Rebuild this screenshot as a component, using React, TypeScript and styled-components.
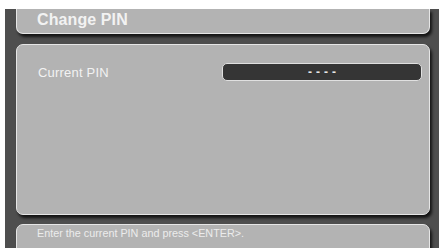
import styled, { createGlobalStyle } from 'styled-components';

const GlobalStyle = createGlobalStyle`
  html, body {
    margin: 0;
    padding: 0;
    background: #ffffff;
  }
  body {
    font-family: "Liberation Sans", Arial, sans-serif;
  }
`;

const Screen = styled.div`
  margin: 9px 0 0 5px;
  height: 239px;
  background: #4e4e4e;
  overflow: hidden;
  display: flex;
  flex-direction: column;
  gap: 10px;
  padding: 0 9px 0 11px;
`;

const Panel = styled.div<{ $top?: boolean }>`
  box-sizing: border-box;
  background: #b3b3b3;
  border: 1.5px solid #e6e6e6;
  border-top: ${(p) => (p.$top ? 'none' : '1.5px solid #e6e6e6')};
  border-radius: ${(p) => (p.$top ? '0 0 7px 7px' : '7px')};
  box-shadow: 2px 3px 3px rgba(0, 0, 0, 0.75);
  color: #f2f2f2;
`;

const Header = styled(Panel)`
  height: 25px;
  flex-shrink: 0;
  display: flex;
  align-items: center;
  padding: 0 0 2px 20px;
  font-size: 16px;
  font-weight: bold;
  letter-spacing: 0.1px;
`;

const Content = styled(Panel)`
  height: 171px;
  flex-shrink: 0;
  margin-bottom: -1px;
  padding: 18px 7px 0 21px;
`;

const Row = styled.div`
  display: flex;
  align-items: center;
  justify-content: space-between;
`;

const Label = styled.span`
  font-size: 13px;
  letter-spacing: 0.2px;
`;

const PinBox = styled.div`
  box-sizing: border-box;
  width: 200px;
  height: 18px;
  background: #353535;
  border: 1.5px solid #e0e0e0;
  border-radius: 5px;
  display: flex;
  align-items: center;
  justify-content: center;
  padding-left: 4px;
  font-size: 12px;
  font-weight: bold;
  letter-spacing: 4px;
  color: #e6e6e6;
`;

const Footer = styled(Panel)`
  height: 34px;
  flex-shrink: 0;
  padding: 2px 0 0 20px;
  font-size: 10.8px;
  color: #ececec;
`;

export default function App() {
  return (
    <>
      <GlobalStyle />
      <Screen>
        <Header $top>Change PIN</Header>
        <Content>
          <Row>
            <Label>Current PIN</Label>
            <PinBox>----</PinBox>
          </Row>
        </Content>
        <Footer>Enter the current PIN and press &lt;ENTER&gt;.</Footer>
      </Screen>
    </>
  );
}
